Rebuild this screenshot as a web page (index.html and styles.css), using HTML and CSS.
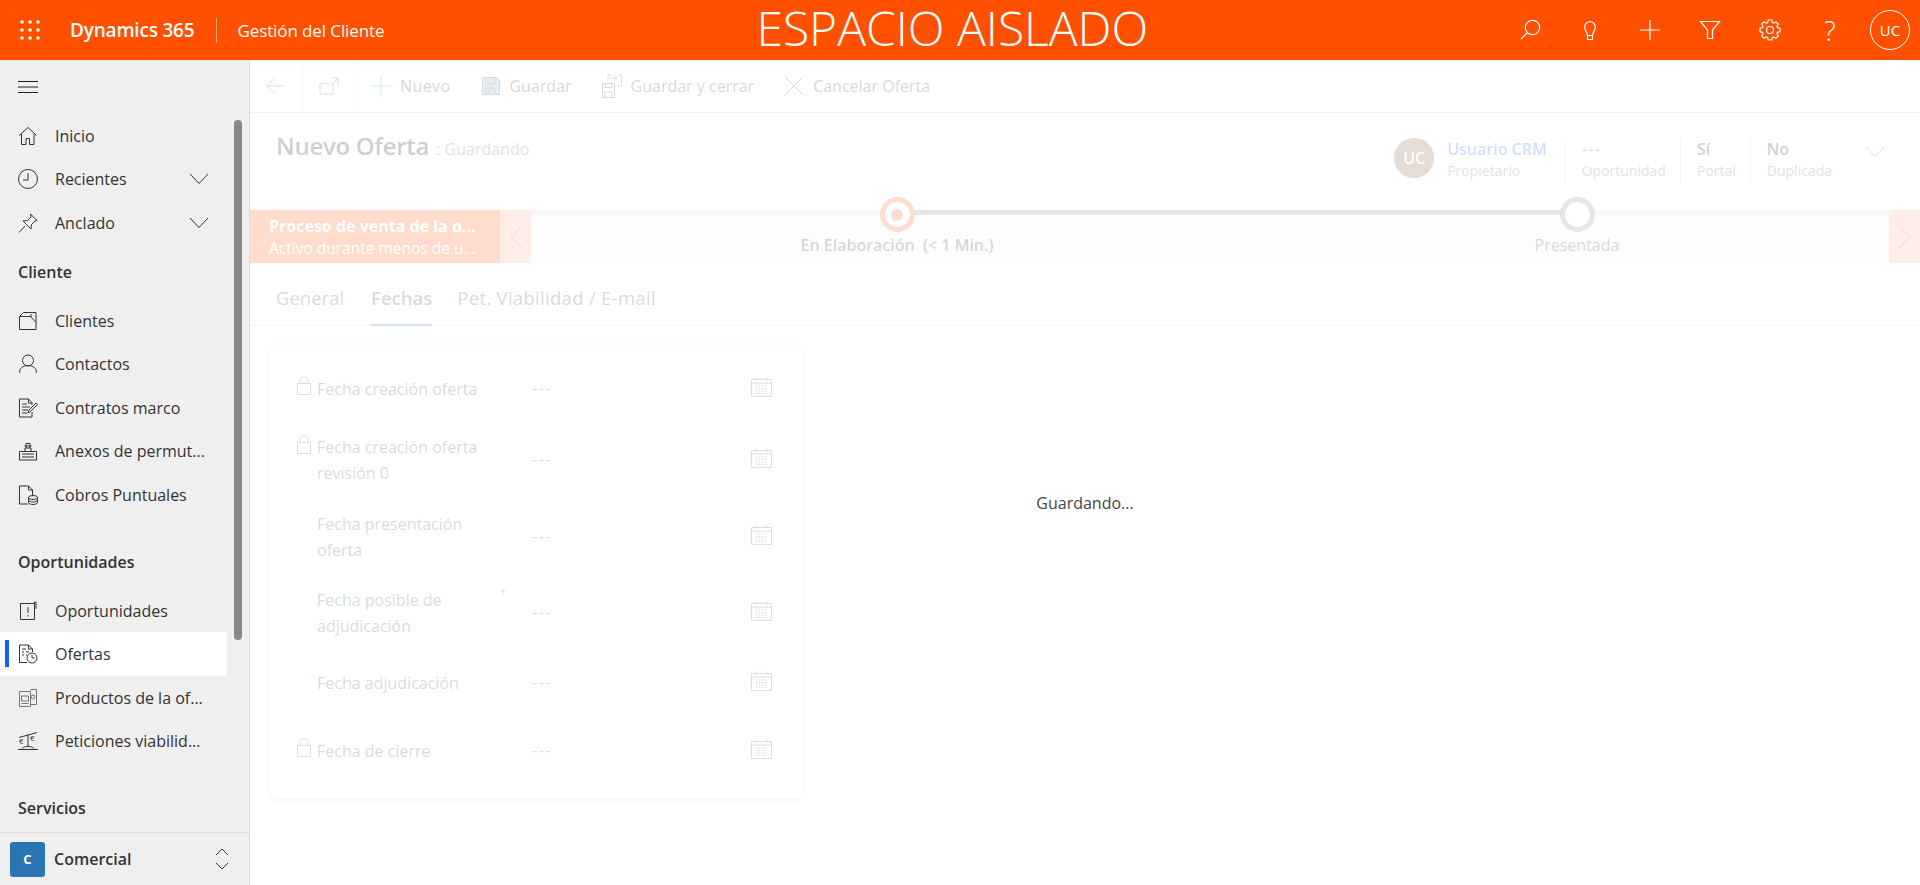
FILE: index.html

```html
<!DOCTYPE html>
<html lang="es">
<head>
  <meta charset="UTF-8">
  <meta name="viewport" content="width=device-width, initial-scale=1.0">
  <title>Nuevo Oferta</title>
  <link rel="stylesheet" href="styles.css">
</head>
<body>
  <svg class="sprites" aria-hidden="true">
    <symbol id="i-cal" viewBox="0 0 21 21">
      <path d="M.5 3.5h20v17H.5zM.5 7h20M5 1.500v3M16 1.500v3" fill="none" stroke="currentColor"/>
      <path d="M5 10h11M5 12.500h11M5 15h11M5 17.500h11" fill="none" stroke="currentColor" stroke-dasharray="1.500 1.300"/>
    </symbol>
    <symbol id="i-lock" viewBox="0 0 14 19">
      <path d="M.5 7.500h13v11H.5zM3 7.500V4.500a4 4 0 0 1 8 0v3" fill="none" stroke="currentColor"/>
    </symbol>
    <symbol id="i-down" viewBox="0 0 20 12">
      <path d="M1 1l9 9.500L19 1" fill="none" stroke="currentColor"/>
    </symbol>
    <g id="gear-tooth"><path d="M9.620 4.680L10.200 2h3.600l.58 2.680 1.120.46" fill="none" stroke="currentColor"/></g>
  </svg>

  <header class="topbar">
    <svg class="waffle" width="20" height="20" viewBox="0 0 20 20" fill="#fff">
      <circle cx="2" cy="2" r="1.800"/><circle cx="10" cy="2" r="1.800"/><circle cx="18" cy="2" r="1.800"/>
      <circle cx="2" cy="10" r="1.800"/><circle cx="10" cy="10" r="1.800"/><circle cx="18" cy="10" r="1.800"/>
      <circle cx="2" cy="18" r="1.800"/><circle cx="10" cy="18" r="1.800"/><circle cx="18" cy="18" r="1.800"/>
    </svg>
    <div class="brand">Dynamics 365</div>
    <div class="app-name">Gestión del Cliente</div>
    <div class="sandbox">ESPACIO AISLADO</div>
    <div class="top-icons">
      <span class="top-icon"><svg width="24" height="24" viewBox="0 0 24 24"><circle cx="14.500" cy="9.500" r="7.200"/><path d="M9.500 14.500L3 21"/></svg></span>
      <span class="top-icon"><svg width="24" height="24" viewBox="0 0 24 24"><path d="M9.500 17.500c0-3-2.800-4.500-2.800-8.500a5.300 5.300 0 0 1 10.600 0c0 4-2.800 5.500-2.800 8.500zM9.500 17.500V21.500h5v-4"/></svg></span>
      <span class="top-icon"><svg width="24" height="24" viewBox="0 0 24 24"><path d="M12 2v20M2 12h20"/></svg></span>
      <span class="top-icon"><svg width="24" height="24" viewBox="0 0 24 24"><path d="M2.500 3.500h19L14.500 12v8.500h-5V12z"/></svg></span>
      <span class="top-icon"><svg width="24" height="24" viewBox="0 0 24 24">
        <use href="#gear-tooth"/><use href="#gear-tooth" transform="rotate(45 12 12)"/>
        <use href="#gear-tooth" transform="rotate(90 12 12)"/><use href="#gear-tooth" transform="rotate(135 12 12)"/>
        <use href="#gear-tooth" transform="rotate(180 12 12)"/><use href="#gear-tooth" transform="rotate(225 12 12)"/>
        <use href="#gear-tooth" transform="rotate(270 12 12)"/><use href="#gear-tooth" transform="rotate(315 12 12)"/>
        <circle cx="12" cy="12" r="3.500"/></svg></span>
      <span class="top-icon help">?</span>
      <span class="top-avatar">UC</span>
    </div>
  </header>

  <div class="layout">
    <nav class="sidebar">
      <div class="side-scroll">
        <div class="hamburger">
          <svg width="20" height="12" viewBox="0 0 20 12"><path d="M0 .5h20M0 6h20M0 11.500h20" stroke="#222"/></svg>
        </div>
        <a class="nav-item">
          <svg class="nav-ico" viewBox="0 0 20 20"><path d="M1 9.500L10 1.500l8.500 8M3.500 8v10.500h4.500v-6h3.500v6H16V8"/></svg>
          <span>Inicio</span>
        </a>
        <a class="nav-item">
          <svg class="nav-ico" viewBox="0 0 20 20"><circle cx="10" cy="10" r="9.500"/><path d="M10 4v7H5"/></svg>
          <span>Recientes</span>
          <svg class="nav-chev"><use href="#i-down"/></svg>
        </a>
        <a class="nav-item">
          <svg class="nav-ico" viewBox="0 0 20 20"><path d="M12.500 1l6.500 6.500-2 .5-3.500 3.500-.5 4.500-8-8 4.500-.5L13 4zM7 13L1 19.500"/></svg>
          <span>Anclado</span>
          <svg class="nav-chev"><use href="#i-down"/></svg>
        </a>

        <h3 class="nav-head">Cliente</h3>
        <a class="nav-item">
          <svg class="nav-ico" viewBox="0 0 20 20"><path d="M1.500 18.500V5.500h11l5.500 6v7zM1.500 5.500l4-4h12.500v10M13 6V3"/></svg>
          <span>Clientes</span>
        </a>
        <a class="nav-item">
          <svg class="nav-ico" viewBox="0 0 20 20"><circle cx="10" cy="6.500" r="5.500"/><path d="M1.500 19c0-5 3.500-7.500 8.500-7.500s8.500 2.500 8.500 7.500"/></svg>
          <span>Contactos</span>
        </a>
        <a class="nav-item">
          <svg class="nav-ico" viewBox="0 0 20 20"><path d="M14 7V4.500L10.500 1h-9v18h12.500v-5M10.500 1v4H14M4 6h5M4 9h8M4 12h6M4 15h5M10 15l1-3 7-7 1.500 1.500-7 7z"/></svg>
          <span>Contratos marco</span>
        </a>
        <a class="nav-item">
          <svg class="nav-ico" viewBox="0 0 20 20"><path d="M1.500 19V10.500h17V19zM4 13h12M4 16h12M7 10.500V7h6v3.500M8 7V2.500h4V7M6.500 5h7"/></svg>
          <span>Anexos de permut...</span>
        </a>
        <a class="nav-item">
          <svg class="nav-ico" viewBox="0 0 20 20"><path d="M10 19H1.500V1h9l4 4v5M10.500 1v4h4"/><ellipse cx="15" cy="12.500" rx="4.500" ry="2"/><path d="M10.500 12.500v5c0 1 2 2 4.500 2s4.500-1 4.500-2v-5M10.500 15c0 1 2 2 4.500 2s4.500-1 4.500-2"/></svg>
          <span>Cobros Puntuales</span>
        </a>

        <h3 class="nav-head spaced">Oportunidades</h3>
        <a class="nav-item">
          <svg class="nav-ico" viewBox="0 0 20 20"><path d="M2.500 2.500h14v16h-14zM16.500 2.500V1h1.500v7M10 6v6M10 14v1.500"/></svg>
          <span>Oportunidades</span>
        </a>
        <a class="nav-item active">
          <svg class="nav-ico" viewBox="0 0 20 20"><path d="M9 18.500H1.500V1h9l4 4v3M10.500 1v4h4M4 5h4M4 8h2M8 8h3M4 11h2M8 11h1"/><circle cx="14" cy="14" r="5"/><path d="M14 11v3h2.500"/></svg>
          <span>Ofertas</span>
        </a>
        <a class="nav-item">
          <svg class="nav-ico soft" viewBox="0 0 20 20"><path d="M1.500 3.500h11v15h-11zM12.500 1.500h6v15h-6M3.500 8h7v5h-7zM3.500 15.500h7"/><circle cx="15" cy="9" r="2"/></svg>
          <span>Productos de la of...</span>
        </a>
        <a class="nav-item">
          <svg class="nav-ico" viewBox="0 0 20 20"><path d="M1 6.500L19 1.500M10 3.500V16M4 18.500c0-2 2.500-3 6-3s6 1 6 3zM0 18.500h20"/><text x="1" y="13" class="ico-text">€</text><text x="12" y="10" class="ico-text">€</text></svg>
          <span>Peticiones viabilid...</span>
        </a>

        <h3 class="nav-head spaced">Servicios</h3>
      </div>
      <div class="scroll-thumb"></div>
      <div class="area-switch">
        <span class="area-tile">C</span>
        <span class="area-name">Comercial</span>
        <svg class="area-arrows" width="14" height="24" viewBox="0 0 14 24"><path d="M1 8l6-6 6 6M1 16l6 6 6-6" fill="none" stroke="#333"/></svg>
      </div>
    </nav>

    <main class="content">
      <div class="cmdbar">
        <span class="cmd-box">
          <svg class="cmd-ico" width="20" height="18" viewBox="0 0 20 18"><path d="M19 9H1.500M9 1L1 9l8 8" fill="none" stroke="#555"/></svg>
        </span>
        <span class="cmd-box boxed">
          <svg class="cmd-ico" width="20" height="18" viewBox="0 0 20 18"><path d="M14 6.500V17H1V6.500h9M12 1h7v7M19 1l-7 7" fill="none" stroke="#555"/></svg>
        </span>
        <span class="cmd first">
          <svg width="20" height="24" viewBox="0 0 20 24"><path d="M10 1v22M0 12h20" fill="none" stroke="#2c9c5a"/></svg>Nuevo
        </span>
        <span class="cmd">
          <svg width="18" height="18" viewBox="0 0 18 18"><path d="M.5.5h14l3 3v14H.5z" fill="#1f6fb0" opacity=".6"/><path d="M.5.5h14l3 3v14H.5zM4 .5v6h9v-6M4 17.500V11h9v6.500M7 13v3" fill="none" stroke="#444"/></svg>Guardar
        </span>
        <span class="cmd tight">
          <svg width="20" height="24" viewBox="0 0 20 24"><path d="M.5 9.500h12v14H.5zM3 9.500v4h7v-4M3 23.500V18h7v5.500" fill="none" stroke="#444"/><path d="M6 6V1h3M16 1h3.500v11H16M8 4h7M12 1.500L15 4l-3 2.500" fill="none" stroke="#1f6fb0"/></svg>Guardar y cerrar
        </span>
        <span class="cmd tight">
          <svg width="20" height="20" viewBox="0 0 20 20"><path d="M1 1l18 18M19 1L1 19" fill="none" stroke="#444"/></svg>Cancelar Oferta
        </span>
      </div>

      <div class="record-head">
        <div class="record-title"><h1>Nuevo Oferta</h1><span class="record-state">: Guardando</span></div>
        <div class="record-meta">
          <span class="owner-pic">UC</span>
          <div class="meta owner"><b class="link">Usuario CRM</b><small>Propietario</small></div>
          <div class="meta"><b class="dim">---</b><small>Oportunidad</small></div>
          <div class="meta"><b>Sí</b><small>Portal</small></div>
          <div class="meta last"><b>No</b><small>Duplicada</small></div>
          <svg class="meta-chev"><use href="#i-down"/></svg>
        </div>
      </div>

      <div class="bpf">
        <div class="bpf-active">
          <strong>Proceso de venta de la o...</strong>
          <span>Activo durante menos de u...</span>
        </div>
        <div class="bpf-nav"><svg width="14" height="24" viewBox="0 0 14 24"><path d="M13 1L2 12l11 11" fill="none" stroke="#555"/></svg></div>
        <div class="bpf-track">
          <div class="stage done">
            <span class="stage-dot current"><i></i></span>
            <span class="stage-name">En Elaboración&nbsp; (&lt; 1 Min.)</span>
          </div>
          <div class="stage">
            <span class="stage-dot"></span>
            <span class="stage-name">Presentada</span>
          </div>
        </div>
        <div class="bpf-nav end"><svg width="14" height="24" viewBox="0 0 14 24"><path d="M1 1l11 11L1 23" fill="none" stroke="#555"/></svg></div>
      </div>

      <div class="tabs">
        <span class="tab">General</span>
        <span class="tab on">Fechas</span>
        <span class="tab wide">Pet. Viabilidad / E-mail</span>
      </div>

      <section class="card">
        <div class="field r1">
          <svg class="lock"><use href="#i-lock"/></svg>
          <span class="f-label">Fecha creación oferta</span>
          <span class="f-value">---</span>
          <svg class="cal"><use href="#i-cal"/></svg>
        </div>
        <div class="field r2">
          <svg class="lock"><use href="#i-lock"/></svg>
          <span class="f-label">Fecha creación oferta revisión 0</span>
          <span class="f-value">---</span>
          <svg class="cal"><use href="#i-cal"/></svg>
        </div>
        <div class="field r3">
          <span class="lock"></span>
          <span class="f-label">Fecha presentación oferta</span>
          <span class="f-value">---</span>
          <svg class="cal"><use href="#i-cal"/></svg>
        </div>
        <div class="field r3">
          <span class="lock"></span>
          <span class="f-label req">Fecha posible de adjudicación<em>+</em></span>
          <span class="f-value">---</span>
          <svg class="cal"><use href="#i-cal"/></svg>
        </div>
        <div class="field r1">
          <span class="lock"></span>
          <span class="f-label">Fecha adjudicación</span>
          <span class="f-value">---</span>
          <svg class="cal"><use href="#i-cal"/></svg>
        </div>
        <div class="field r4">
          <svg class="lock"><use href="#i-lock"/></svg>
          <span class="f-label">Fecha de cierre</span>
          <span class="f-value">---</span>
          <svg class="cal"><use href="#i-cal"/></svg>
        </div>
      </section>

      <div class="saving"><span>Guardando...</span></div>
    </main>
  </div>
</body>
</html>
```

FILE: styles.css

```css
* {
  box-sizing: border-box;
}
html, body {
  height: 100%;
}
body {
  margin: 0;
  font-family: "Open Sans", "Noto Sans", sans-serif;
  color: #333;
  background: #fff;
  overflow: hidden;
}
.sprites {
  display: none;
}

/* top bar */
.topbar {
  display: flex;
  align-items: center;
  height: 60px;
  background: #ff5000;
  color: #fff;
}
.waffle {
  margin-left: 20px;
  flex: none;
}
.brand {
  margin-left: 30px;
  padding-right: 22px;
  font-size: 19px;
  font-weight: 600;
  white-space: nowrap;
  letter-spacing: -.2px;
}
.app-name {
  display: flex;
  align-items: center;
  height: 25px;
  padding-left: 20px;
  border-left: 1px solid rgba(255,255,255,.5);
  font-size: 17px;
  white-space: nowrap;
  letter-spacing: -.1px;
}
.sandbox {
  flex: 1;
  padding: 0 0 4px 20px;
  text-align: center;
  font-size: 48px;
  font-weight: 300;
  line-height: 52px;
  white-space: nowrap;
}
.top-icons {
  display: flex;
  align-items: center;
  padding-right: 10px;
}
.top-icon {
  display: flex;
  align-items: center;
  justify-content: center;
  width: 60px;
  height: 60px;
}
.top-icon svg {
  fill: none;
  stroke: #fff;
  stroke-width: 1.200;
}
.top-icon.help {
  font-size: 27px;
  font-weight: 300;
}
.top-avatar {
  display: flex;
  align-items: center;
  justify-content: center;
  width: 40px;
  height: 40px;
  margin-left: 10px;
  border: 1px solid #fff;
  border-radius: 50%;
  font-size: 15px;
}

/* layout */
.layout {
  display: flex;
  height: 825px;
}

/* sidebar */
.sidebar {
  position: relative;
  display: flex;
  flex-direction: column;
  flex: none;
  width: 250px;
  background: #efefef;
  border-right: 1px solid #dcdcdc;
}
.side-scroll {
  flex: 1;
  min-height: 0;
  overflow: hidden;
}
.hamburger {
  display: flex;
  align-items: center;
  height: 54px;
  padding-left: 18px;
}
.nav-item {
  display: flex;
  align-items: center;
  height: 43.600px;
  width: 227px;
  padding-left: 18px;
  font-size: 16px;
  color: #333;
  white-space: nowrap;
}
.nav-item span {
  margin-left: 17px;
}
.nav-ico {
  flex: none;
  width: 20px;
  height: 20px;
  fill: none;
  stroke: #333;
  stroke-width: 1;
}
.nav-ico.soft {
  stroke: #777;
}
.ico-text {
  font-size: 8px;
  fill: #333;
  stroke: none;
}
.nav-chev {
  width: 20px;
  height: 12px;
  margin-left: auto;
  margin-right: 18px;
  color: #333;
}
.nav-item.active {
  position: relative;
  background: #fff;
}
.nav-item.active::before {
  content: "";
  position: absolute;
  left: 5px;
  top: 8px;
  bottom: 9px;
  width: 4px;
  background: #0f62fe;
}
.nav-head {
  margin: 0;
  height: 54px;
  padding: 16px 0 0 18px;
  font-size: 16px;
  font-weight: 600;
  line-height: 22px;
  color: #333;
}
.nav-head.spaced {
  height: 72px;
  padding-top: 34px;
}
.scroll-thumb {
  position: absolute;
  left: 234px;
  top: 60px;
  width: 8px;
  height: 520px;
  border-radius: 4px;
  background: #888;
}
.area-switch {
  display: flex;
  align-items: center;
  flex: none;
  height: 53px;
  padding-left: 10px;
  border-top: 1px solid #dcdcdc;
}
.area-tile {
  display: flex;
  align-items: center;
  justify-content: center;
  width: 35px;
  height: 35px;
  border-radius: 3px;
  background: #2a75b3;
  color: #fff;
  font-size: 13px;
  font-weight: 700;
}
.area-name {
  margin-left: 9px;
  font-size: 16px;
  font-weight: 600;
}
.area-arrows {
  margin-left: auto;
  margin-right: 20px;
}

/* main form */
.content {
  position: relative;
  flex: 1;
  min-width: 0;
}
.cmdbar {
  display: flex;
  align-items: center;
  height: 53px;
  border-bottom: 1px solid #bbb;
  font-size: 16px;
  color: #333;
}
.cmd-box {
  display: flex;
  align-items: center;
  justify-content: center;
  width: 52px;
  height: 52px;
}
.cmd-box.boxed {
  width: 53px;
  height: 53px;
  border-left: 1px solid #ddd;
  border-right: 1px solid #ddd;
}
.cmd {
  display: flex;
  align-items: center;
  gap: 9px;
  margin-left: 32px;
  white-space: nowrap;
}
.cmd.first {
  margin-left: 16px;
  letter-spacing: .4px;
}
.cmd.tight {
  margin-left: 30px;
}

.record-head {
  display: flex;
  justify-content: space-between;
  height: 97px;
}
.record-title {
  display: flex;
  align-items: baseline;
  gap: 7px;
  padding: 15px 0 0 26px;
}
.record-title h1 {
  margin: 0;
  font-size: 24px;
  font-weight: 600;
  line-height: 36px;
  letter-spacing: -.3px;
  color: #111;
}
.record-state {
  font-size: 16px;
  color: #666;
}
.record-meta {
  display: flex;
  align-items: flex-start;
  padding-top: 25px;
}
.owner-pic {
  display: flex;
  align-items: center;
  justify-content: center;
  width: 40px;
  height: 40px;
  margin-right: 13px;
  border-radius: 50%;
  background: #7d502d;
  color: #fff;
  font-size: 16px;
  font-weight: 600;
}
.meta {
  display: flex;
  flex-direction: column;
  height: 47px;
  padding: 0 14px 0 16px;
  border-left: 1px solid #ccc;
  white-space: nowrap;
}
.meta.owner {
  padding: 0 18px 0 0;
  border-left: 0;
}
.meta.last {
  padding-right: 0;
}
.meta b {
  font-size: 16px;
  font-weight: 600;
  line-height: 22px;
  color: #111;
}
.meta b.link {
  color: #0f62fe;
}
.meta b.dim {
  color: #666;
  letter-spacing: 1.500px;
}
.meta small {
  font-size: 14px;
  line-height: 22px;
  color: #666;
}
.meta-chev {
  width: 20px;
  height: 12px;
  margin: 8px 35px 0 33px;
  color: #555;
}

/* business process bar */
.bpf {
  display: flex;
  height: 53px;
}
.bpf-active {
  display: flex;
  flex-direction: column;
  justify-content: center;
  flex: none;
  width: 250px;
  padding-left: 19px;
  background: #ff5000;
  color: #fff;
  white-space: nowrap;
  line-height: 22px;
  font-size: 15.500px;
}
.bpf-active strong {
  font-size: 16px;
  font-weight: 700;
}
.bpf-nav {
  display: flex;
  align-items: center;
  justify-content: center;
  flex: none;
  width: 31px;
  background: #ffaa8c;
}
.bpf-track {
  display: flex;
  flex: 1;
  min-width: 0;
  padding-left: 26px;
  background: #f5f5f5;
  border-top: 5px solid #d8d8d8;
}
.stage {
  position: relative;
  display: flex;
  flex-direction: column;
  align-items: center;
  flex: none;
  width: 680px;
  margin-top: -5px;
}
.stage.done::after {
  content: "";
  position: absolute;
  left: 340px;
  top: 0;
  width: 680px;
  height: 5px;
  background: #808080;
}
.stage-dot {
  position: relative;
  z-index: 1;
  display: flex;
  align-items: center;
  justify-content: center;
  width: 35px;
  height: 35px;
  margin-top: -13px;
  border: 5px solid #808080;
  border-radius: 50%;
  background: #fff;
}
.stage-dot.current {
  border-color: #ff5000;
}
.stage-dot i {
  width: 12px;
  height: 12px;
  border-radius: 50%;
  background: #ff5000;
}
.stage-name {
  margin-top: 2px;
  font-size: 16px;
  line-height: 22px;
  color: #333;
  white-space: nowrap;
}
.stage.done .stage-name {
  font-weight: 600;
}

/* tabs */
.tabs {
  display: flex;
  align-items: stretch;
  gap: 27px;
  height: 63px;
  padding-left: 26px;
  border-bottom: 1px solid #ccc;
  font-size: 18.500px;
  color: #444;
}
.tab {
  display: flex;
  align-items: center;
  padding-top: 7px;
  border-bottom: 2px solid transparent;
  margin-bottom: -1px;
  white-space: nowrap;
}
.tab.on {
  font-weight: 600;
  border-bottom-color: #0f62fe;
}
.tab.wide {
  margin-left: -2px;
  letter-spacing: .3px;
}

/* card with date fields */
.card {
  width: 533px;
  height: 453px;
  margin: 19px 0 0 20px;
  padding: 11px 0 0 27px;
  border-radius: 6px;
  box-shadow: 0 1px 6px rgba(0,0,0,.25);
}
.field {
  display: flex;
  align-items: center;
  height: 64px;
  padding-right: 31px;
}
.field.r2 {
  height: 78px;
}
.field.r3 {
  height: 76px;
}
.field.r4 {
  height: 72px;
}
.lock {
  flex: none;
  align-self: center;
  width: 14px;
  height: 19px;
  margin-right: 6px;
  margin-top: -6px;
  color: #555;
}
.field.r2 .lock {
  margin-top: -30px;
}
.f-label {
  position: relative;
  width: 215px;
  padding-top: 1px;
  padding-right: 40px;
  font-size: 16px;
  line-height: 26px;
  color: #444;
}
.f-label em {
  position: absolute;
  left: 183px;
  top: -8px;
  font-style: normal;
  font-size: 11px;
  color: #3c3cff;
}
.f-value {
  flex: 1;
  font-size: 16px;
  letter-spacing: 1.500px;
  color: #555;
}
.cal {
  flex: none;
  width: 21px;
  height: 21px;
  margin-top: -4px;
  color: #555;
}

/* saving overlay */
.saving {
  position: absolute;
  inset: 0;
  z-index: 2;
  display: flex;
  align-items: center;
  justify-content: center;
  padding-top: 61px;
  background: rgba(255,255,255,.8);
  font-size: 16px;
  color: #444;
}
```
